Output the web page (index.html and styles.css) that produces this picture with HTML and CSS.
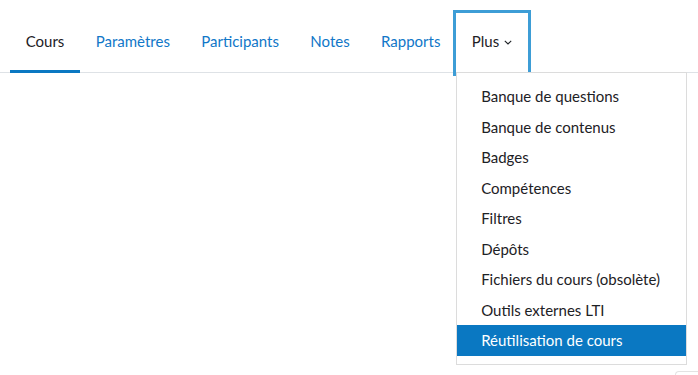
FILE: index.html
```html
<!DOCTYPE html>
<html lang="fr">
<head>
    <meta charset="UTF-8">
    <meta name="viewport" content="width=device-width, initial-scale=1.0">
    <title>Cours</title>
    <link rel="stylesheet" href="styles.css">
</head>
<body>

<nav class="secondary-nav">
    <ul class="nav-tabs">
        <li><a class="nav-link active" href="#">Cours</a></li>
        <li><a class="nav-link" href="#">Paramètres</a></li>
        <li><a class="nav-link" href="#">Participants</a></li>
        <li><a class="nav-link" href="#">Notes</a></li>
        <li><a class="nav-link" href="#">Rapports</a></li>
        <li class="more-menu">
            <a class="nav-link plus focused" href="#">
                Plus
                <svg class="caret" width="8" height="5" viewBox="0 0 8 5">
                    <polyline points="0.8,0.8 4,4 7.2,0.8" fill="none" stroke="#1d2125" stroke-width="1.1"/>
                </svg>
            </a>
            <!-- Menu opened from "Plus" -->
            <div class="more-list">
                <a class="more-item" href="#">Banque de questions</a>
                <a class="more-item" href="#">Banque de contenus</a>
                <a class="more-item" href="#">Badges</a>
                <a class="more-item" href="#">Compétences</a>
                <a class="more-item" href="#">Filtres</a>
                <a class="more-item" href="#">Dépôts</a>
                <a class="more-item" href="#">Fichiers du cours (obsolète)</a>
                <a class="more-item" href="#">Outils externes LTI</a>
                <a class="more-item selected" href="#">Réutilisation de cours</a>
            </div>
        </li>
    </ul>
</nav>

<div class="footer-btn"></div>

</body>
</html>
```

FILE: styles.css
```css
body {
    font-family: Lato, 'Open Sans', Arial, sans-serif;
    font-size: 15px;
    line-height: 1.5;
    margin: 0;
    padding: 13px 0 0 0;
    background: #fff;
    color: #1d2125;
    overflow: hidden;
    height: 362px;
}
.secondary-nav {
    border-bottom: 1px solid #dee2e6;
    padding-left: 10px;
}
.nav-tabs {
    display: flex;
    list-style: none;
    margin: 0 0 -1px 0;
    padding: 0;
}
.nav-tabs li {
    position: relative;
}
.nav-link {
    display: flex;
    align-items: center;
    gap: 5px;
    height: 57px;
    padding: 0 15.7px;
    border-bottom: 3px solid transparent;
    color: #1177c8;
    text-decoration: none;
}
.nav-link.active {
    color: #1d2125;
    border-bottom-color: #0a78c2;
}
.nav-link.plus {
    color: #1d2125;
}
.nav-link.focused {
    box-shadow: 0 0 0 3px #3d9dd6;
}
.caret {
    margin-top: 2px;
}
.more-list {
    position: absolute;
    top: 59px;
    left: 0;
    width: 229px;
    padding: 8px 0;
    background: #fff;
    border: 1px solid #dcdcdc;
    z-index: 10;
}
.more-item {
    display: block;
    padding: 4px 24px;
    color: #1d2125;
    text-decoration: none;
    white-space: nowrap;
}
.more-item.selected {
    background-color: #0a78c2;
    color: #fff;
}
/* corner of the floating help button, cut off by the window edge */
.footer-btn {
    position: absolute;
    top: 371px;
    left: 675px;
    width: 22px;
    height: 3px;
    border: 1px solid #e3e3e3;
    border-right: none;
    border-bottom: none;
    border-radius: 8px 0 0 0;
}
```
